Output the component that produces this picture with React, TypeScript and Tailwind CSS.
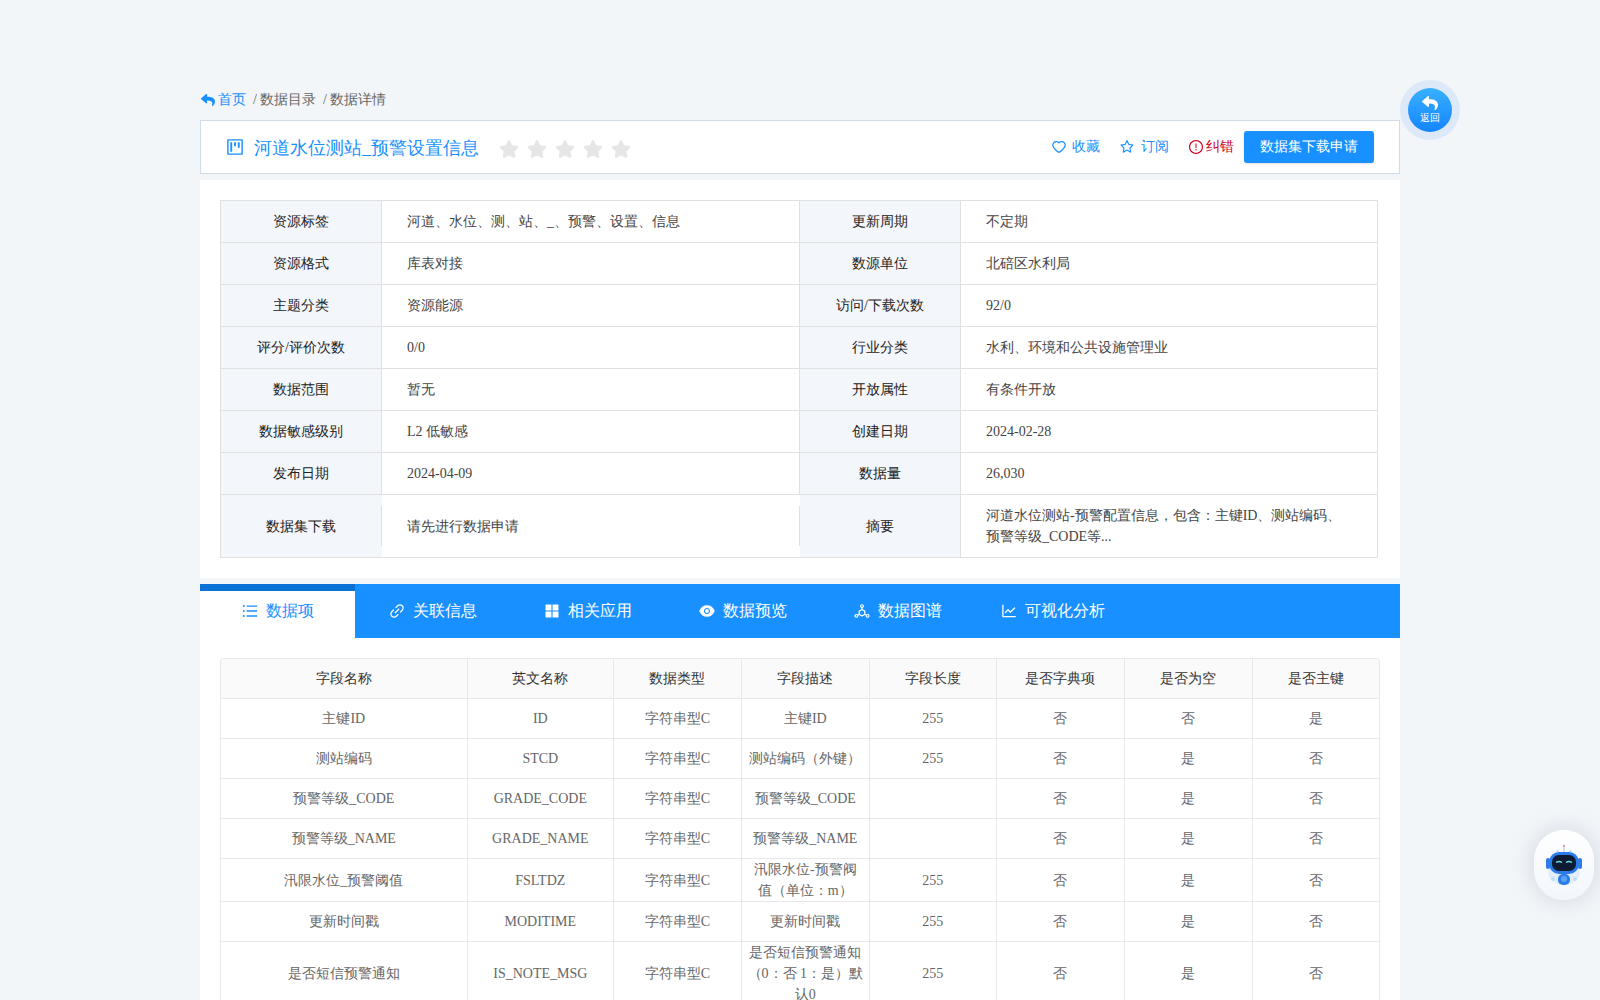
import type { ReactNode } from "react";
import { FaReply, FaStar } from "react-icons/fa";
import {
  AiFillAppstore,
  AiFillEye,
  AiOutlineDeploymentUnit,
  AiOutlineExclamationCircle,
  AiOutlineHeart,
  AiOutlineLineChart,
  AiOutlineLink,
  AiOutlineProject,
  AiOutlineStar,
  AiOutlineUnorderedList,
} from "react-icons/ai";

const info = [
  ["资源标签", "河道、水位、测、站、_、预警、设置、信息", "更新周期", "不定期"],
  ["资源格式", "库表对接", "数源单位", "北碚区水利局"],
  ["主题分类", "资源能源", "访问/下载次数", "92/0"],
  ["评分/评价次数", "0/0", "行业分类", "水利、环境和公共设施管理业"],
  ["数据范围", "暂无", "开放属性", "有条件开放"],
  ["数据敏感级别", "L2 低敏感", "创建日期", "2024-02-28"],
  ["发布日期", "2024-04-09", "数据量", "26,030"],
];

const tabs: [string, ReactNode][] = [
  ["关联信息", <AiOutlineLink size={18} />],
  ["相关应用", <AiFillAppstore size={18} />],
  ["数据预览", <AiFillEye size={18} />],
  ["数据图谱", <AiOutlineDeploymentUnit size={18} />],
  ["可视化分析", <AiOutlineLineChart size={18} />],
];

const head = ["字段名称", "英文名称", "数据类型", "字段描述", "字段长度", "是否字典项", "是否为空", "是否主键"];

const rows = [
  ["主键ID", "ID", "字符串型C", "主键ID", "255", "否", "否", "是"],
  ["测站编码", "STCD", "字符串型C", "测站编码（外键）", "255", "否", "是", "否"],
  ["预警等级_CODE", "GRADE_CODE", "字符串型C", "预警等级_CODE", "", "否", "是", "否"],
  ["预警等级_NAME", "GRADE_NAME", "字符串型C", "预警等级_NAME", "", "否", "是", "否"],
  ["汛限水位_预警阈值", "FSLTDZ", "字符串型C", "汛限水位-预警阀值（单位：m）", "255", "否", "是", "否"],
  ["更新时间戳", "MODITIME", "字符串型C", "更新时间戳", "255", "否", "是", "否"],
  ["是否短信预警通知", "IS_NOTE_MSG", "字符串型C", "是否短信预警通知（0：否 1：是）默认0", "255", "否", "是", "否"],
];

function Robot() {
  return (
    <svg width="40" height="44" viewBox="0 0 40 44">
      <circle cx="20" cy="3" r="1.3" fill="#e8a0a0" />
      <path d="M20 4v6M13 7l2 4M27 7l-2 4" stroke="#9cc4f5" strokeWidth="1" fill="none" />
      <ellipse cx="20" cy="29" rx="16" ry="13" fill="#e3eefc" />
      <rect x="2" y="15" width="4" height="11" rx="2" fill="#2f7be8" />
      <rect x="34" y="15" width="4" height="11" rx="2" fill="#2f7be8" />
      <rect x="5" y="9" width="30" height="22" rx="10" fill="#2a7de9" />
      <rect x="8" y="12" width="24" height="16" rx="7" fill="#0d1b33" />
      <path d="M12 19.5q3-2 6 0M22 19.5q3-2 6 0" stroke="#5fe0df" strokeWidth="1.4" fill="none" />
      <rect x="14" y="31" width="12" height="11" rx="5" fill="#2a7de9" />
      <circle cx="20" cy="36" r="3" fill="#5aa2f5" />
      <circle cx="9" cy="36" r="2" fill="#c6dcf8" />
      <circle cx="31" cy="36" r="2" fill="#c6dcf8" />
    </svg>
  );
}

export default function App() {
  return (
    <div className="relative h-[1000px] overflow-hidden bg-[#f3f6f9] pt-[90px] font-['Liberation_Serif',serif] text-sm text-[#666]">
      <div className="mx-auto w-[1200px]">
        <div className="flex h-[20px] items-center leading-5">
          <FaReply className="ml-[1px] text-[#1890ff]" size={14} />
          <span className="ml-[3px] text-[#1890ff]">首页</span>
          <span className="ml-[7px]">/</span>
          <span className="ml-[3px]">数据目录</span>
          <span className="ml-[7px]">/</span>
          <span className="ml-[3px]">数据详情</span>
        </div>

        <div className="mt-[10px] flex h-[54px] items-center border border-[#d0dcea] bg-white pl-[24px] pr-[25px]">
          <AiOutlineProject className="text-[#1890ff]" size={20} />
          <h1 className="ml-[9px] pt-[4px] text-[18px] font-normal text-[#1890ff]">河道水位测站_预警设置信息</h1>
          <div className="ml-[20px] mt-[3px] flex gap-[8px] text-[#e6e6e6]">
            {[0, 1, 2, 3, 4].map((i) => (
              <FaStar key={i} size={20} />
            ))}
          </div>
          <div className="ml-auto flex items-center text-[#1890ff]">
            <AiOutlineHeart size={16} />
            <span className="ml-[5px]">收藏</span>
            <AiOutlineStar className="ml-[19px]" size={16} />
            <span className="ml-[6px]">订阅</span>
            <AiOutlineExclamationCircle className="ml-[19px] text-[#d0021b]" size={16} />
            <span className="ml-[2px] text-[#d0021b]">纠错</span>
            <button className="ml-[10px] h-[32px] w-[130px] rounded-[3px] bg-[#1890ff] text-white shadow-sm">数据集下载申请</button>
          </div>
        </div>

        <div className="mt-[6px] h-[398px] bg-white pl-[20px] pt-[20px]">
          <table className="w-[1157px] table-fixed border-separate border-spacing-0 border-l border-t border-[#e0e0e0] text-[#444]">
            <colgroup>
              <col className="w-[161px]" />
              <col className="w-[418px]" />
              <col className="w-[161px]" />
              <col className="w-[417px]" />
            </colgroup>
            <tbody>
              {info.map((r) => (
                <tr key={r[0]} className="h-[42px]">
                  <td className="border-b border-r border-[#e0e0e0] bg-[#f3f6fa] text-center text-[#222]">{r[0]}</td>
                  <td className="border-b border-r border-[#e0e0e0] pl-[25px]">{r[1]}</td>
                  <td className="border-b border-r border-[#e0e0e0] bg-[#f3f6fa] text-center text-[#222]">{r[2]}</td>
                  <td className="border-b border-r border-[#e0e0e0] pl-[25px]">{r[3]}</td>
                </tr>
              ))}
              <tr className="h-[63px]">
                <td className="border-b border-[#e0e0e0] border-r-transparent border-r bg-[#f3f6fa] pt-[2px] text-center text-[#222]">数据集下载</td>
                <td className="border-b border-[#e0e0e0] p-0">
                  <div className="-ml-px flex h-[40px] items-center border-x border-[#e0e0e0] pl-[25px] pt-[2px]">请先进行数据申请</div>
                </td>
                <td className="border-b border-r border-[#e0e0e0] bg-[#f3f6fa] pt-[2px] text-center text-[#222]">摘要</td>
                <td className="border-b border-r border-[#e0e0e0] pl-[25px] pr-[30px] leading-[21.5px]">河道水位测站-预警配置信息，包含：主键ID、测站编码、预警等级_CODE等...</td>
              </tr>
            </tbody>
          </table>
        </div>

        <div className="mt-[6px] flex h-[54px] bg-[#1890ff] text-base text-white">
          <div className="flex w-[155px] items-center justify-center gap-[7px] border-t-[7px] border-[#0a72d6] bg-white pb-[7px] pr-[1px] text-[#1890ff]">
            <AiOutlineUnorderedList size={18} />
            数据项
          </div>
          {tabs.map(([label, icon]) => (
            <div key={label} className="flex w-[155px] items-center justify-center gap-[7px] pr-[1px]">
              {icon}
              {label}
            </div>
          ))}
        </div>

        <div className="bg-white px-[20px] pt-[20px]">
          <table className="w-[1159px] table-fixed border-separate border-spacing-0 rounded-t-[4px] border-l border-t border-[#e8e8e8] text-center">
            <colgroup>
              <col className="w-[247px]" />
              <col className="w-[146px]" />
              <col className="w-[128px]" />
              <col className="w-[128px]" />
              <col className="w-[127px]" />
              <col className="w-[128px]" />
              <col className="w-[128px]" />
              <col className="w-[127px]" />
            </colgroup>
            <thead>
              <tr className="h-[40px] bg-[#fafafa] text-[#333]">
                {head.map((h) => (
                  <th key={h} className="border-b border-r border-[#e8e8e8] pr-[0.5px] font-normal first:rounded-tl-[4px] last:rounded-tr-[4px]">{h}</th>
                ))}
              </tr>
            </thead>
            <tbody>
              {rows.map((r) => (
                <tr key={r[0]} className="h-[40px]">
                  {r.map((c, i) => (
                    <td key={i} className="border-b border-r border-[#e8e8e8] py-0 pl-[5.3px] pr-[5.7px] leading-[21px]">{c}</td>
                  ))}
                </tr>
              ))}
            </tbody>
          </table>
        </div>
      </div>

      <div className="absolute left-[1400px] top-[80px] flex h-[60px] w-[60px] items-center justify-center rounded-full bg-[#dde9f8]">
        <div className="flex h-[44px] w-[44px] flex-col items-center justify-center rounded-full bg-gradient-to-b from-[#38b0ff] to-[#1684ff] pb-[1px] text-white">
          <FaReply size={16} />
          <span className="mt-[1px] text-[10px] leading-[12px]">返回</span>
        </div>
      </div>

      <div className="absolute left-[1534px] top-[830px] flex h-[70px] w-[60px] items-center justify-center rounded-[30px] bg-gradient-to-b from-white to-[#f2f6fc] shadow-[0_0_24px_rgba(120,140,170,0.3)]">
        <Robot />
      </div>
    </div>
  );
}
